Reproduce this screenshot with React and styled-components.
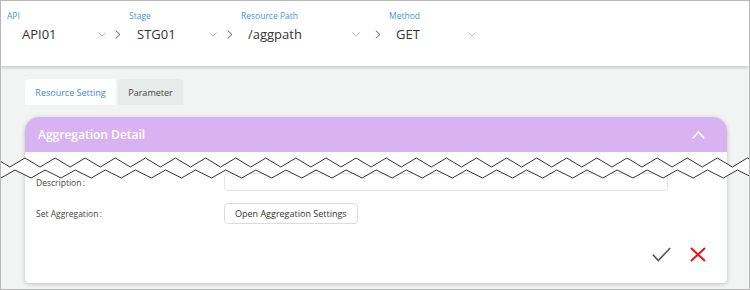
import React from 'react';
import styled, { createGlobalStyle } from 'styled-components';

const GlobalStyle = createGlobalStyle`
  html, body { margin: 0; padding: 0; }
  body { font-family: "Open Sans", "Noto Sans", sans-serif; }
`;

const Frame = styled.div`
  position: relative;
  width: 750px;
  height: 290px;
  box-sizing: border-box;
  border: 1px solid #b9b9b9;
  background: #f2f3f3;
  overflow: hidden;
`;

const Header = styled.header`
  height: 65px;
  box-sizing: border-box;
  padding: 9px 0 0 6px;
  background: #fff;
  box-shadow: 0 2px 3px rgba(0, 0, 0, 0.16);
  display: flex;
  align-items: flex-start;
`;

const Group = styled.div`
  width: ${(p) => p.$width}px;
  display: flex;
  flex-direction: column;
`;

const Label = styled.div`
  font-size: 8.5px;
  line-height: 12px;
  color: #4694e4;
`;

const ValueRow = styled.div`
  display: flex;
  align-items: center;
  height: 20px;
  margin-top: 2px;
  padding-left: ${(p) => p.$indent}px;
  padding-right: ${(p) => p.$trail}px;
`;

const Value = styled.span`
  flex: 1;
  font-size: 13px;
  color: #333;
`;

const Sep = styled.div`
  display: flex;
  align-items: center;
  height: 20px;
  margin: 14px 8px 0;
`;

const Tabs = styled.nav`
  display: flex;
  gap: 2px;
  margin: 13px 0 0 24px;
`;

const Tab = styled.div`
  width: ${(p) => p.$width}px;
  height: 26px;
  display: flex;
  align-items: center;
  justify-content: center;
  border-radius: 4px 4px 0 0;
  font-size: 9px;
  background: ${(p) => (p.$active ? '#fff' : '#e9eaea')};
  color: ${(p) => (p.$active ? '#3f84ec' : '#444')};
`;

const Card = styled.section`
  width: 702px;
  height: 166px;
  margin: 12px 0 0 24px;
  background: #fff;
  border-radius: 14px 14px 4px 4px;
  box-shadow: 0 1px 4px rgba(0, 0, 0, 0.22);
  display: flex;
  flex-direction: column;
`;

const CardHeader = styled.div`
  height: 35px;
  flex: none;
  display: flex;
  align-items: center;
  justify-content: space-between;
  padding: 0 22px 0 13px;
  border-radius: 14px 14px 0 0;
  background: #d9b3f1;
`;

const Title = styled.h2`
  margin: 0;
  font-size: 12px;
  font-weight: 600;
  color: #fff;
`;

const Body = styled.div`
  flex: 1;
  display: grid;
  grid-template-columns: 188px 444px;
  grid-auto-rows: min-content;
  row-gap: 12px;
  align-items: center;
  padding: 21px 0 0 11px;
`;

const FieldLabel = styled.div`
  font-size: 8.5px;
  color: #444;
`;

const Input = styled.div`
  height: 18px;
  box-sizing: border-box;
  border: 1px solid #e3e3e3;
  border-radius: 4px;
`;

const Button = styled.button`
  justify-self: start;
  height: 21px;
  padding: 0 10px;
  border: 1px solid #dcdcdc;
  border-radius: 4px;
  background: #fff;
  font-family: inherit;
  font-size: 9px;
  color: #333;
`;

const Actions = styled.div`
  display: flex;
  justify-content: flex-end;
  align-items: center;
  gap: 19px;
  padding: 0 21px 21px 0;
`;

const Break = styled.svg`
  position: absolute;
  left: -1px;
  top: 149px;
`;

const ChevronDown = () => (
  <svg width="8" height="5" viewBox="0 0 8 5">
    <polyline points="0.5,0.5 4,4.2 7.5,0.5" fill="none" stroke="#b5b5b5" strokeWidth="0.9" />
  </svg>
);

const ChevronRight = () => (
  <svg width="6" height="9" viewBox="0 0 6 9">
    <polyline points="0.7,0.6 5,4.5 0.7,8.4" fill="none" stroke="#666" strokeWidth="1" />
  </svg>
);

const selectors = [
  { label: 'API', value: 'API01', width: 100, indent: 15, trail: 1 },
  { label: 'Stage', value: 'STG01', width: 90, indent: 8, trail: 2 },
  { label: 'Resource Path', value: '/aggpath', width: 126, indent: 7, trail: 7 },
  { label: 'Method', value: 'GET', width: 87, indent: 7, trail: 0 },
];

// peaks and troughs of one torn edge, in page pixels relative to y=150
function zigzag(peakX, peakY, troughX, troughY) {
  const pts = [];
  for (let k = -1; k < 27; k++) {
    pts.push([peakX + 30.1 * k, peakY], [troughX + 30.1 * k, troughY]);
  }
  return pts.sort((a, b) => a[0] - b[0]);
}

function TornEdge() {
  const top = zigzag(25, 8, 40, 17);
  const bottom = zigzag(15, 20, 31, 28);
  const str = (pts) => pts.map(([x, y]) => `${x.toFixed(1)},${y}`).join(' ');
  return (
    <Break width="752" height="34" viewBox="0 0 752 34">
      <polygon points={str([...top, ...bottom.slice().reverse()])} fill="#fff" />
      <polyline points={str(top)} fill="none" stroke="#333" strokeWidth="1" />
      <polyline points={str(bottom)} fill="none" stroke="#333" strokeWidth="1" />
    </Break>
  );
}

export default function App() {
  return (
    <Frame>
      <GlobalStyle />
      <Header>
        {selectors.map((s, i) => (
          <React.Fragment key={s.label}>
            {i > 0 && (
              <Sep>
                <ChevronRight />
              </Sep>
            )}
            <Group $width={s.width}>
              <Label>{s.label}</Label>
              <ValueRow $indent={s.indent} $trail={s.trail}>
                <Value>{s.value}</Value>
                <ChevronDown />
              </ValueRow>
            </Group>
          </React.Fragment>
        ))}
      </Header>

      <Tabs>
        <Tab $width={91} $active>Resource Setting</Tab>
        <Tab $width={65}>Parameter</Tab>
      </Tabs>

      <Card>
        <CardHeader>
          <Title>Aggregation Detail</Title>
          <svg width="13" height="8" viewBox="0 0 13 8">
            <polyline points="0.8,7.3 6.5,1 12.2,7.3" fill="none" stroke="#fff" strokeWidth="1.6" />
          </svg>
        </CardHeader>
        <Body>
          <FieldLabel>Description{'\u2009'}:</FieldLabel>
          <Input />
          <FieldLabel>Set Aggregation{'\u2009'}:</FieldLabel>
          <Button>Open Aggregation Settings</Button>
        </Body>
        <Actions>
          <svg width="19" height="15" viewBox="0 0 19 15">
            <polyline points="0.8,7.5 6.3,13.6 18.2,1" fill="none" stroke="#555" strokeWidth="1.6" />
          </svg>
          <svg width="16" height="15" viewBox="0 0 16 15">
            <path d="M1 1 L15 14 M15 1 L1 14" stroke="#f01010" strokeWidth="2" />
          </svg>
        </Actions>
      </Card>

      <TornEdge />
    </Frame>
  );
}
